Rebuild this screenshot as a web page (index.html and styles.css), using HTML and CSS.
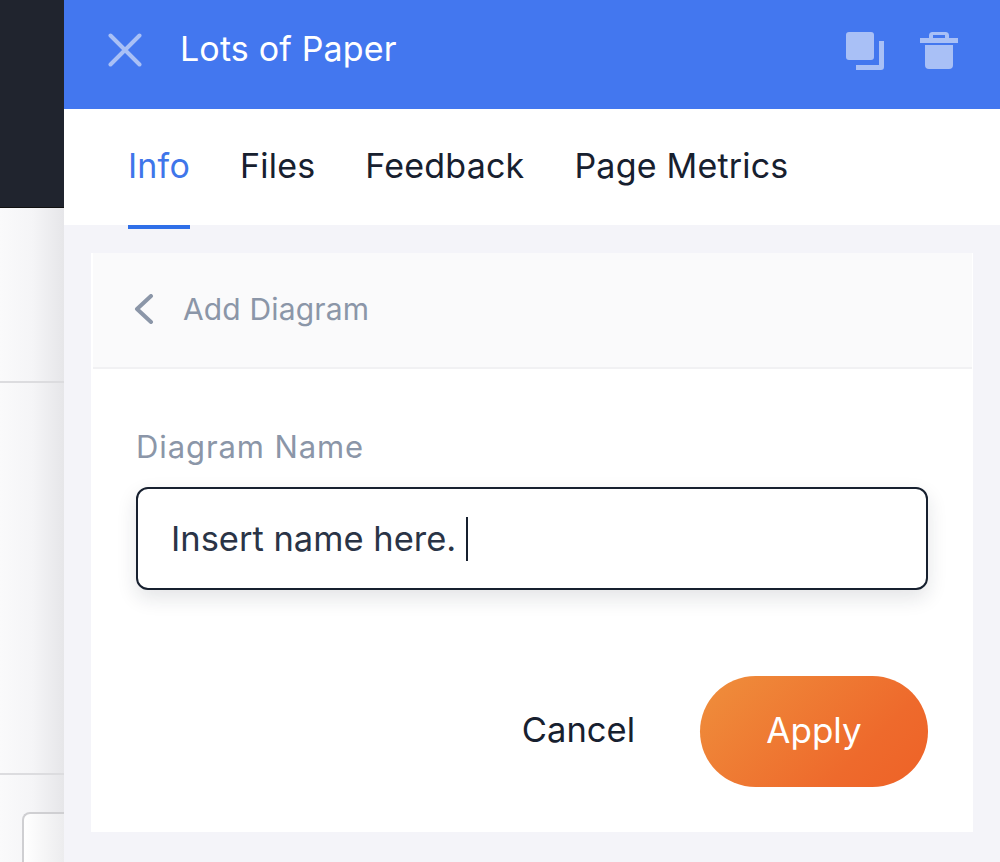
FILE: index.html
```html
<!DOCTYPE html>
<html lang="en">
<head>
<meta charset="utf-8">
<title>Lots of Paper</title>
<link rel="stylesheet" href="styles.css">
</head>
<body>
<div class="app">
  <aside class="backdrop">
    <div class="backdrop-top"></div>
    <div class="backdrop-row backdrop-row-a"></div>
    <div class="backdrop-row backdrop-row-b"></div>
    <div class="backdrop-row backdrop-row-c"><div class="backdrop-card"></div></div>
  </aside>
  <main class="panel">
    <header class="panel-head">
      <svg class="icon-close" viewBox="0 0 34 34" aria-hidden="true"><path d="M2.500 2.500 31.500 31.500M31.500 2.500 2.500 31.500"/></svg>
      <h1 class="panel-title">Lots of Paper</h1>
      <svg class="icon-copy" viewBox="0 0 38 38" aria-hidden="true">
        <rect x="0" y="0" width="28" height="28" rx="3"/>
        <path d="M33 9h5v26a3 3 0 0 1-3 3H10v-5h23z"/>
      </svg>
      <svg class="icon-trash" viewBox="0 0 38 38" aria-hidden="true">
        <path d="M9 6V3.500A3.500 3.500 0 0 1 12.500 0h13A3.500 3.500 0 0 1 29 3.500V6h9v5H0V6zM13 3v3h12V3z" fill-rule="evenodd"/>
        <path d="M5 13h28v20a4 4 0 0 1-4 4H9a4 4 0 0 1-4-4z"/>
      </svg>
    </header>
    <nav class="tabs">
      <a class="tab tab-active">Info</a>
      <a class="tab">Files</a>
      <a class="tab">Feedback</a>
      <a class="tab">Page Metrics</a>
    </nav>
    <div class="panel-body">
      <section class="card">
        <div class="card-head">
          <svg class="icon-back" viewBox="0 0 20 30" aria-hidden="true"><path d="M17 2 3 15l14 13"/></svg>
          <span class="card-title">Add Diagram</span>
        </div>
        <div class="card-body">
          <label class="field-label">Diagram Name</label>
          <div class="field-input"><span>Insert name here.</span><i class="caret"></i></div>
          <div class="actions">
            <button class="btn-cancel">Cancel</button>
            <button class="btn-apply">Apply</button>
          </div>
        </div>
      </section>
    </div>
  </main>
</div>
</body>
</html>
```

FILE: styles.css
```css
* { box-sizing: border-box; }
html, body { margin: 0; height: 100%; overflow: hidden; }
body { font-family: Inter, Lato, sans-serif; color: #17202f; background: #fff; }

.app { display: flex; width: 1000px; height: 862px; }

.backdrop {
  width: 64px; flex: none; display: flex; flex-direction: column;
  background: linear-gradient(90deg, #fafafb 0, #f5f5f7 50%, #e6e6e9 100%);
}
.backdrop-top { height: 208px; flex: none; background: #20242e; border-bottom: 1px solid #111; }
.backdrop-row { flex: none; border-bottom: 2px solid #dcdcdf; }
.backdrop-row-a { height: 175px; }
.backdrop-row-b { height: 392px; }
.backdrop-row-c { flex: 1; border-bottom: 0; padding: 37px 0 0 22px; }
.backdrop-card {
  height: 50px; border: 2px solid #cfcfd2; border-right: 0; border-bottom: 0;
  border-radius: 8px 0 0 0;
  background: linear-gradient(90deg, #fff, #ececee);
}

.panel { flex: 1; display: flex; flex-direction: column; background: #f4f4f9; min-width: 0; }

.panel-head {
  height: 109px; flex: none; display: flex; align-items: center;
  padding: 0 42px 10px 44px; background: #4377ef;
}
.icon-close { width: 34px; height: 34px; fill: none; stroke: #a9c0f6; stroke-width: 4; stroke-linecap: round; }
.panel-title { margin: 0 0 2px 38px; flex: 1; font-size: 34px; letter-spacing: .15px; font-weight: 400; color: #fff; line-height: 40px; }
.icon-copy { width: 38px; height: 38px; fill: #a9c0f6; margin-top: 2px; }
.icon-trash { width: 38px; height: 38px; fill: #a9c0f6; margin-left: 36px; margin-top: 2px; }

.tabs {
  height: 116px; flex: none; display: flex; gap: 50px; padding-left: 64px;
  background: #fff;
}
.tab {
  height: 120px; padding-top: 36px; font-size: 34px; letter-spacing: .2px; line-height: 42px; color: #17202f;
}
.tab-active { color: #3f76ea; border-bottom: 4px solid #2f6fe8; }

.panel-body { flex: 1; padding: 28px 27px 30px; min-height: 0; }

.card { background: #fff; height: 579px; }
.card-head {
  height: 116px; display: flex; align-items: center; padding: 0 0 2px 41px;
  background: #fafafb; border-bottom: 2px solid #f1f1f3;
  margin: 0 1px 0 2px;
}
.icon-back { width: 20px; height: 30px; fill: none; stroke: #8b96a8; stroke-width: 4; stroke-linecap: round; stroke-linejoin: round; }
.card-title { margin-left: 29px; font-size: 30px; letter-spacing: .15px; line-height: 40px; color: #8b96a8; }

.card-body { padding: 60px 45px 0; }
.field-label { display: block; font-size: 31px; letter-spacing: .9px; line-height: 36px; color: #8b96a8; }
.field-input {
  display: flex; align-items: center; height: 103px; margin-top: 22px; padding: 0 33px;
  border: 2px solid #17202f; border-radius: 12px; background: #fff;
  box-shadow: 0 8px 20px rgba(23, 32, 47, .12);
  font-size: 34.500px; color: #2a3446;
}
.caret { width: 2px; height: 44px; background: #17202f; margin-left: 10px; }

.actions { display: flex; justify-content: flex-end; align-items: center; margin-top: 86px; }
.btn-cancel, .btn-apply { border: 0; font-family: inherit; font-size: 34.500px; background: none; padding: 0 0 4px; }
.btn-cancel { color: #17202f; margin-right: 65px; }
.btn-apply {
  width: 228px; height: 111px; border-radius: 56px; color: #fff; font-size: 35px;
  background: linear-gradient(135deg, #ef8f3c 0, #ee6a2c 70%, #ee6227 100%);
}
```
